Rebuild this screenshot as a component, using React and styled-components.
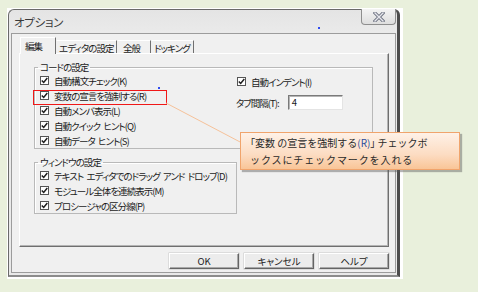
import React from 'react';
import styled, { createGlobalStyle } from 'styled-components';

const GlobalStyle = createGlobalStyle`
  html, body {
    margin: 0;
    padding: 0;
  }
  body {
    background: #e9f0dc;
    font-family: "Noto Sans CJK JP", "Noto Sans", sans-serif;
    color: #1b1b1b;
  }
  *, *::before, *::after {
    box-sizing: border-box;
  }
`;

const Page = styled.div`
  position: relative;
  width: 478px;
  height: 292px;
  padding: 8px 0 0 7px;
  overflow: hidden;
`;

const Frame = styled.div`
  width: 396px;
  height: 271px;
  background: #fff;
  padding: 1px 0 0 1px;
`;

const Window = styled.div`
  width: 392px;
  height: 268px;
  display: flex;
  flex-direction: column;
  border: 1px solid #6a6a6a;
  border-right: 3px solid #4c4c4c;
  border-bottom: 2px solid #8c8c8c;
  border-radius: 6px 6px 0 0;
  background: linear-gradient(#e4e4e4, #ececec 30px, #e9e9e9);
  font-feature-settings: "palt";
  font-size: 9.5px;
  letter-spacing: -0.95px;
  word-spacing: 2px;
`;

const TitleBar = styled.div`
  height: 23px;
  flex: none;
  display: flex;
  justify-content: space-between;
  align-items: flex-start;
`;

const Title = styled.div`
  padding: 5px 0 0 5px;
  font-size: 11.5px;
  letter-spacing: -0.3px;
  line-height: 14px;
  color: #3a3a3a;
`;

const CloseButton = styled.div`
  width: 35px;
  height: 16px;
  margin: -1px 1px 0 0;
  border: 1px solid #8e8e8e;
  border-top: none;
  border-radius: 0 0 4px 4px;
  background: linear-gradient(#f4f4f4, #dedede);
  display: flex;
  align-items: center;
  justify-content: center;
`;

const Client = styled.div`
  flex: 1;
  margin: 0 1px 2px 2px;
  border: 1px solid #9c9c9c;
  background: #f0f0f0;
  padding: 3px 6px 3px 7px;
  display: flex;
  flex-direction: column;
`;

const TabRow = styled.div`
  height: 16px;
  display: flex;
  align-items: flex-end;
  padding-left: 1px;
  position: relative;
  z-index: 1;
`;

const Tab = styled.div`
  width: ${p => p.$w}px;
  height: ${p => (p.$active ? 17 : 13)}px;
  margin-bottom: ${p => (p.$active ? -1 : 0)}px;
  padding-left: ${p => p.$pl}px;
  padding-top: ${p => (p.$active ? 0 : 2)}px;
  background: #f0f0f0;
  border-top: 1px solid #fff;
  border-left: 1px solid ${p => (p.$active ? '#fff' : '#f0f0f0')};
  border-right: 1px solid #707070;
  display: flex;
  align-items: center;
  line-height: 12px;
  white-space: nowrap;
`;

const Panel = styled.div`
  height: 194px;
  border: 1px solid;
  border-color: #fff #6f6f6f #6f6f6f #fff;
  box-shadow: inset -1px -1px 0 #b4b4b4;
  padding: 0 13px 0 14px;
`;

const Group = styled.fieldset`
  margin: ${p => p.$mt}px 0 0 0;
  width: ${p => p.$w}px;
  padding: 0;
  border: 1px solid #b9b9b9;
  box-shadow: inset 1px 1px 0 #fff;
  min-width: 0;
`;

const Legend = styled.legend`
  margin-left: 3px;
  padding: 0 2px;
  line-height: 12px;
  height: 12px;
`;

const GroupBody = styled.div`
  display: flex;
  padding-left: 5px;
`;

const Column = styled.div`
  width: ${p => p.$w || 'auto'};
  display: flex;
  flex-direction: column;
  gap: ${p => p.$gap || 0}px;
  padding-top: ${p => p.$pt || 0}px;
`;

const Row = styled.label`
  height: 15px;
  display: flex;
  align-items: center;
  gap: 5px;
  line-height: 12px;
  white-space: nowrap;
`;

const Box = styled.span`
  width: 9px;
  height: 9px;
  flex: none;
  border: 1px solid #555;
  background: #fff;
  display: flex;
  align-items: center;
  justify-content: center;
`;

const FieldRow = styled.div`
  height: 15px;
  display: flex;
  align-items: center;
  gap: 9px;
  margin-left: -1px;
  line-height: 12px;
  white-space: nowrap;
`;

const Input = styled.div`
  width: 55px;
  height: 15px;
  border: 1px solid;
  border-color: #7a7a7a #e4e4e4 #e4e4e4 #7a7a7a;
  box-shadow: inset 1px 1px 0 #b5b5b5;
  background: #fff;
  padding-left: 3px;
  line-height: 13px;
`;

const ButtonRow = styled.div`
  margin-top: 6px;
  display: flex;
  justify-content: flex-end;
  gap: 5px;
`;

const Button = styled.div`
  width: 70px;
  height: 16px;
  border: 1px solid;
  border-color: #fff #646464 #646464 #fff;
  box-shadow: inset -1px -1px 0 #a8a8a8, 0 0 0 0.5px #c8c8c8;
  background: #ececec;
  display: flex;
  align-items: center;
  justify-content: center;
  line-height: 12px;
  letter-spacing: 0;
`;

const Highlight = styled.div`
  position: absolute;
  left: 33px;
  top: 90px;
  width: 134px;
  height: 15px;
  border: 1.5px solid #f01818;
`;

const Leader = styled.svg`
  position: absolute;
  left: 0;
  top: 0;
  pointer-events: none;
`;

const Callout = styled.div`
  position: absolute;
  left: 240px;
  top: 132px;
  width: 220px;
  height: 38px;
  border: 1px solid #f0a46c;
  background: linear-gradient(#fef1e7, #fcdcc2 60%, #f9c597);
  box-shadow: 2px 2px 1px rgba(90, 90, 90, 0.45);
  padding: 1px 0 0 9px;
  font-size: 10px;
  line-height: 17px;
  color: #2a2a2a;
  white-space: nowrap;
`;

const CalloutLine = styled.div`
  letter-spacing: ${p => p.$ls}px;
`;

const Bracket = styled.span`
  font-feature-settings: "palt";
`;

const Key = styled.span`
  color: #2c4c9c;
  letter-spacing: 0;
`;

const Dot = styled.span`
  position: absolute;
  left: ${p => p.$x}px;
  top: ${p => p.$y}px;
  width: 2px;
  height: 2px;
  background: #2f4cf0;
`;

const Check = () => (
  <svg width="7" height="7" viewBox="0 0 7 7">
    <path d="M0.8 3.4 L2.7 5.4 L6.3 1" fill="none" stroke="#1e1e1e" strokeWidth="1.5" />
  </svg>
);

const CloseGlyph = () => (
  <svg width="12" height="10" viewBox="0 0 12 10">
    <path d="M2 1 L10 9 M10 1 L2 9" stroke="#6d7280" strokeWidth="3.2" strokeLinecap="square" />
    <path d="M2 1 L10 9 M10 1 L2 9" stroke="#e8e8ee" strokeWidth="1.4" strokeLinecap="square" />
  </svg>
);

const CheckRow = ({ children }) => (
  <Row>
    <Box><Check /></Box>
    {children}
  </Row>
);

const tabs = [
  { label: '編集', w: 36, pl: 4, active: true },
  { label: 'エディタの設定', w: 61, pl: 2 },
  { label: '全般', w: 34, pl: 5 },
  { label: 'ドッキング', w: 43, pl: 2 },
];

const codeOptions = [
  '自動構文チェック(K)',
  '変数の宣言を強制する(R)',
  '自動メンバ表示(L)',
  '自動クイック ヒント(Q)',
  '自動データ ヒント(S)',
];

const windowOptions = [
  'テキスト エディタでのドラッグ アンド ドロップ(D)',
  'モジュール全体を連続表示(M)',
  'プロシージャの区分線(P)',
];

export default function App() {
  return (
    <>
      <GlobalStyle />
      <Page>
        <Frame>
          <Window>
            <TitleBar>
              <Title>オプション</Title>
              <CloseButton><CloseGlyph /></CloseButton>
            </TitleBar>
            <Client>
              <TabRow>
                {tabs.map(t => (
                  <Tab key={t.label} $w={t.w} $pl={t.pl} $active={t.active}>{t.label}</Tab>
                ))}
              </TabRow>
              <Panel>
                <Group $mt={7} $w={339}>
                  <Legend>コードの設定</Legend>
                  <GroupBody>
                    <Column $w="197px">
                      {codeOptions.map(o => <CheckRow key={o}>{o}</CheckRow>)}
                    </Column>
                    <Column $pt={1} $gap={6}>
                      <CheckRow>自動インデント(I)</CheckRow>
                      <FieldRow>
                        タブ間隔(T):
                        <Input>4</Input>
                      </FieldRow>
                    </Column>
                  </GroupBody>
                </Group>
                <Group $mt={7} $w={203}>
                  <Legend>ウィンドウの設定</Legend>
                  <GroupBody>
                    <Column>
                      {windowOptions.map(o => <CheckRow key={o}>{o}</CheckRow>)}
                    </Column>
                  </GroupBody>
                </Group>
              </Panel>
              <ButtonRow>
                <Button>OK</Button>
                <Button>キャンセル</Button>
                <Button>ヘルプ</Button>
              </ButtonRow>
            </Client>
          </Window>
        </Frame>
        <Dot $x={122} $y={48} />
        <Dot $x={158} $y={87} />
        <Dot $x={318} $y={27} />
        <Highlight />
        <Leader width="478" height="292">
          <line x1="166" y1="103" x2="242" y2="143" stroke="#f6c29a" strokeWidth="1" />
        </Leader>
        <Callout>
          <CalloutLine $ls={0}>
            <Bracket>「</Bracket>変数 の宣言を強制する<Key>(R)</Key><Bracket>」</Bracket> チェックボ
          </CalloutLine>
          <CalloutLine $ls={0.9}>ックスにチェックマークを入れる</CalloutLine>
        </Callout>
      </Page>
    </>
  );
}
